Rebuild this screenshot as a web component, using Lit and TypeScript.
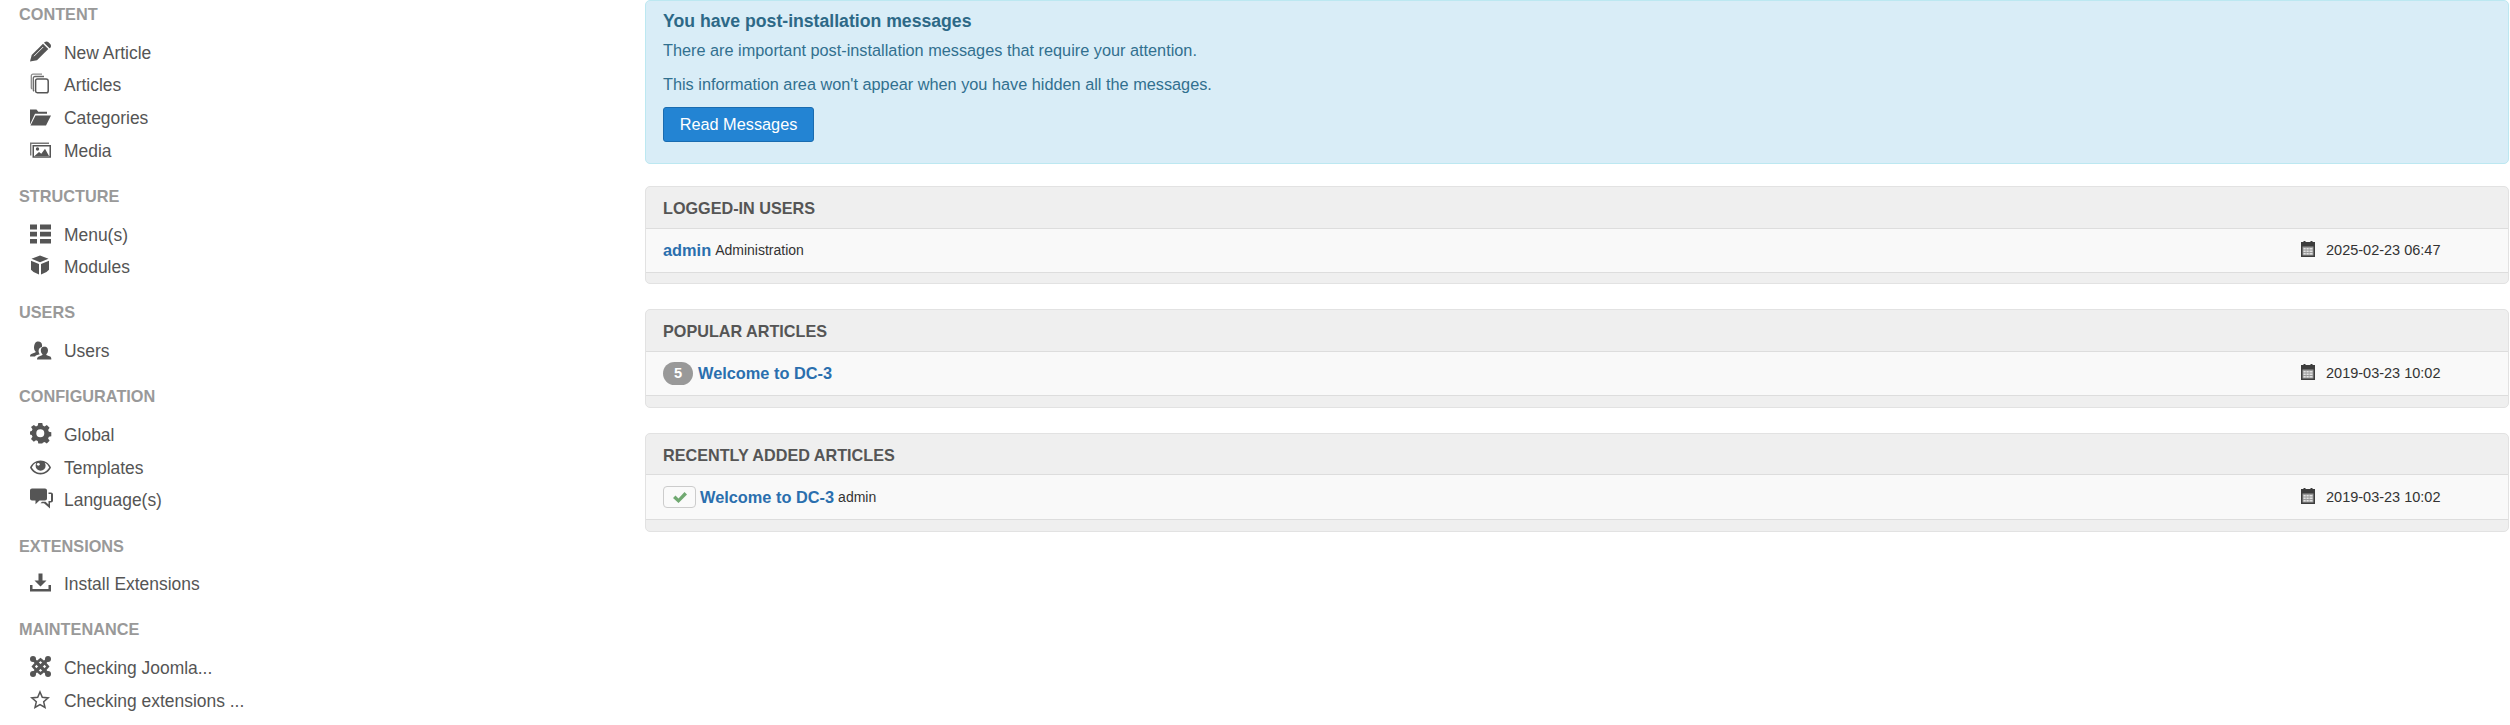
import { LitElement, html, css, svg } from "lit";
import { customElement } from "lit/decorators.js";

const icons: Record<string, any> = {
  pencil: svg`<path d="M1.700 14L13 2.700l5.300 5.300L7 19.300 0 20.500z"/><path d="M14.500 1.300c1.300-1.200 3-1 4 0l1.700 1.700c1 1 1.200 2.700 0 4L19.500 7.200 14 1.800z"/><path d="M4 15.200L13.200 6" stroke="#fff" stroke-width=".9" fill="none"/>`,
  copy: svg`<path fill="none" stroke="#8a8a8a" stroke-width="1.300" d="M12 1.200H3c-1 0-1.700.7-1.700 1.700v11.500c0 .8.300 1.200.7 1.500"/><path fill="none" stroke="#666" stroke-width="1.300" d="M14 3.500H5c-1 0-1.700.7-1.700 1.700v11.500c0 .8.300 1.200.7 1.500"/><path fill="#fff" stroke="currentColor" stroke-width="1.500" d="M7.300 6H16c1.300 0 2.200 1 2.200 2.200V18c0 1-.8 1.800-1.800 1.800H7.300c-1 0-1.700-.7-1.700-1.700V7.700C5.600 6.700 6.300 6 7.300 6z"/>`,
  folder: svg`<path d="M0 3.500h6.500l1.800 2.200H17v2H5L0 18.500z"/><path d="M5.500 9.500H21l-5 10H0.500z"/>`,
  images: svg`<path fill="#777" d="M0 3.500h19v1.400H1.400v11.500H0z"/><path fill-rule="evenodd" d="M2.500 6H21v12.800H2.500zM4 7.500v9.800h15.500V7.500z"/><circle cx="7.500" cy="10" r="1.700"/><path d="M4.500 17l4.500-4 2.300 1.700 3.700-5 4 7.300z"/>`,
  list: svg`<path d="M0 1.500h7v5H0zM10 1.500h11v5H10zM0 8.800h7v4.800H0zM10 8.800h11v4.800H10zM0 16h7v4.500H0zM10 16h11v4.500H10z"/>`,
  cube: svg`<path d="M10 .5l8.500 3.300L10 7.200 1.500 3.800zM1 5.700l8 3.200v10.600l-5.500-2.500L1 14.800zM19 5.700l-8 3.200v10.600l5.500-2.500 2.500-2.200z"/>`,
  users: svg`<path d="M8.200 2.500c2.300 0 3.900 1.700 3.900 3.900 0 .5-.1 1-.2 1.500-1.900.3-3.300 1.900-3.300 4 0 1.300.5 2.500 1.300 3.300l-2.700.9c-.9.300-1.700.8-2.200 1.300H0c.1-1.800.7-2.400 2.500-3l2.600-.9c.5-.2.600-.6.500-1.100-.9-.8-1.600-2.200-1.600-4C4.300 4.200 5.900 2.500 8.200 2.500z"/><path d="M14.200 7.500c2.300 0 3.800 1.600 3.800 3.700 0 2-.8 3.200-1.700 4 0 .6.100.9.600 1.100l2.500.9c1.300.5 1.700.9 1.900 2.300v1H7c.1-1.900.6-2.600 2.500-3.300l2.400-.9c.5-.2.600-.5.600-1.100-.9-.8-1.700-2-1.700-4 0-2.100 1.500-3.700 3.900-3.700z"/>`,
  gear: svg`<path fill-rule="evenodd" d="M8 0h4l.5 2.600 1.800.8 2.200-1.500 2.800 2.800-1.500 2.200.8 1.800 2.400.5v4l-2.400.5-.8 1.800 1.500 2.200-2.800 2.800-2.200-1.500-1.800.8L12 20.500H8l-.5-2.500-1.800-.8-2.200 1.500L.700 15.900l1.500-2.200-.8-1.800L-1 11.400 0 8.300l1.400-.3.800-1.800L.700 4 3.500 1.900l2.200 1.500 1.800-.8zM10 6.200a4 4 0 100 8 4 4 0 000-8z" transform="translate(.3 0)"/>`,
  eye: svg`<path fill-rule="evenodd" d="M10.500 4.500c4.800 0 8.700 2.900 10.500 7-1.800 4.100-5.700 7-10.500 7S1.800 15.600 0 11.500c1.800-4.100 5.700-7 10.500-7zM6.300 6.700C4.300 7.500 2.800 9.300 1.800 11.500c1.600 3 4.900 5.300 8.700 5.300s7.100-2.300 8.700-5.300c-1-2.200-2.500-4-4.500-4.800.6.900.9 1.900.9 3a5 5 0 01-10 0c0-1.100.300-2.100.7-3z"/><circle cx="8.300" cy="8.300" r="1.400" fill="#fff"/>`,
  comments: svg`<path d="M2 .5h13c1.100 0 2 .9 2 2v8c0 1.100-.9 2-2 2H9.500l-4 3.700V12.500H2c-1.100 0-2-.9-2-2v-8C0 1.400.900.500 2 .5z"/><path d="M18.500 4.500h2.500c1.100 0 2 .9 2 2v6c0 1.100-.9 2-2 2h-1v6l-6-5.300h-3.500l1.500-1.500h3.500l3 2.700V13h2.500V6h-2.500z"/>`,
  download: svg`<path d="M8.500 1.500h4v7H16.500l-6 6-6-6h4zM0 13h2.500v4h16v-4H21v6.500H0z"/>`,
  joomla: svg`<g fill="none" stroke="currentColor" stroke-width="3.200"><path d="M3 3l15 15M18 3L3 18"/></g><path fill="none" stroke="currentColor" stroke-width="2.600" d="M6.500 6.800l4-3.300 4 3.300 3.300 3.700-3.300 3.700-4 3.300-4-3.300-3.300-3.700z"/><circle cx="3" cy="3" r="3"/><circle cx="18" cy="3" r="3"/><circle cx="3" cy="18" r="3"/><circle cx="18" cy="18" r="3"/>`,
  star: svg`<path fill="none" stroke="currentColor" stroke-width="1.500" d="M10 3l2.300 5.300 5.900.6-4.500 3.900 1.300 5.700L10 15.500l-5 3 1.300-5.700-4.500-3.900 5.900-.6z"/>`,
  cal: svg`<path fill="#3d3d3d" d="M0 1h2.500V0h2v1h5V0h2v1H14v15H0z"/><path fill="#9a9a9a" d="M1.500 5.500h11v9h-11z"/><path fill="#e2e2e2" d="M2.500 7h2.200v1.500H2.500zM5.500 7h2.200v1.500H5.500zM8.500 7h3v1.500h-3zM2.500 9.500h2.200V11H2.500zM5.500 9.500h2.200V11H5.500zM8.500 9.500h3V11h-3zM2.500 12h2.200v1.500H2.500zM5.500 12h2.200v1.500H5.500zM8.500 12h3v1.500h-3z"/>`,
  check: svg`<path d="M0 6l2.500-2.500 3 3L11.500 0 14 2.500 5.500 11z"/>`,
};

const ic = (n: string, w: number, h: number, vb: string, cls = "ic") =>
  html`<svg class=${cls} width=${w} height=${h} viewBox=${vb} fill="currentColor">${icons[n]}</svg>`;

const groups = [
  { t: "CONTENT", items: [["pencil", "New Article"], ["copy", "Articles"], ["folder", "Categories"], ["images", "Media"]] },
  { t: "STRUCTURE", items: [["list", "Menu(s)"], ["cube", "Modules"]] },
  { t: "USERS", items: [["users", "Users"]] },
  { t: "CONFIGURATION", items: [["gear", "Global"], ["eye", "Templates"], ["comments", "Language(s)"]] },
  { t: "EXTENSIONS", items: [["download", "Install Extensions"]] },
  { t: "MAINTENANCE", items: [["joomla", "Checking Joomla..."], ["star", "Checking extensions ..."]] },
];

@customElement("app-root")
export class AppRoot extends LitElement {
  static styles = css`
    :host { display: block; font-family: "Liberation Sans", Arial, sans-serif; color: #515151; background: #fff; height: 725px; overflow: hidden; }
    .page { display: flex; align-items: flex-start; }
    .side { width: 645px; flex: none; padding-top: 2px; }
    .cap { height: 24px; line-height: 24px; margin: 0 0 11px 19px; font-size: 16.300px; font-weight: 700; color: #999; }
    .group { margin-bottom: 16.400px; }
    .item { display: flex; align-items: center; height: 32.600px; padding-left: 30px; font-size: 17.450px; color: #555; }
    .ic { display: block; flex: none; margin-bottom: 4px; }
    .iw { width: 34px; flex: none; }
    .main { flex: 1; min-width: 0; margin-right: 1px; }
    .alert { box-sizing: border-box; height: 164px; background: #d9edf7; border: 1px solid #bce8f1; border-radius: 5px; color: #31708f; padding: 0 17px; font-size: 16.300px; margin-bottom: 22px; }
    .alert h4 { margin: 10px 0 0; font-size: 17.650px; line-height: 20px; font-weight: 700; color: #2d6987; }
    .alert p { margin: 0; line-height: 24px; }
    .p1 { margin-top: 7px !important; }
    .p2 { margin-top: 10px !important; }
    .btn { box-sizing: border-box; display: flex; align-items: center; justify-content: center; width: 151px; height: 35px; margin-top: 11px; background: #2384d3; border: 1px solid #1a6cb0; border-radius: 3px; color: #fff; font-size: 16.300px; }
    .panel { border: 1px solid #e2e2e2; border-radius: 5px; background: #efefef; margin-bottom: 25px; padding-bottom: 10.800px; }
    .head { box-sizing: border-box; height: 41.600px; line-height: 43px; padding-left: 17px; font-size: 16.200px; font-weight: 700; color: #555; border-bottom: 1px solid #ddd; }
    .row { box-sizing: border-box; height: 44px; display: flex; align-items: center; padding-left: 17px; background: #f9f9f9; border-bottom: 1px solid #ddd; color: #333; font-size: 14px; }
    .row.tall { height: 45px; }
    .link { color: #2a6fae; font-weight: 700; font-size: 16.350px; }
    .sub { margin-left: 4px; color: #333; }
    .date { margin-left: auto; width: 207px; flex: none; display: flex; align-items: center; font-size: 14.500px; color: #333; }
    .date .cal { margin-right: 11px; margin-bottom: 2px; }
    .badge { box-sizing: border-box; width: 30px; height: 23px; line-height: 23px; text-align: center; border-radius: 12px; background: #999; color: #fff; font-size: 14.600px; font-weight: 700; margin-right: 5px; }
    .ok { box-sizing: border-box; width: 33px; height: 22px; display: flex; align-items: center; justify-content: center; border: 1px solid #ccc; border-radius: 4px; background: #fafafa; margin-right: 4px; color: #70a971; }
  `;
  private date(d: string) {
    return html`<span class="date">${ic("cal", 14, 16, "0 0 14 16", "cal")}${d}</span>`;
  }
  render() {
    return html`<div class="page">
      <nav class="side">
        ${groups.map((g) => html`<div class="group">
          <div class="cap">${g.t}</div>
          ${g.items.map((i) => html`<div class="item"><span class="iw">${ic(i[0], 23, 21, "0 0 23 21")}</span><span>${i[1]}</span></div>`)}
        </div>`)}
      </nav>
      <main class="main">
        <section class="alert">
          <h4>You have post-installation messages</h4>
          <p class="p1">There are important post-installation messages that require your attention.</p>
          <p class="p2">This information area won't appear when you have hidden all the messages.</p>
          <div class="btn">Read Messages</div>
        </section>
        <section class="panel">
          <div class="head">LOGGED-IN USERS</div>
          <div class="row"><span class="link">admin</span><span class="sub">Administration</span>${this.date("2025-02-23 06:47")}</div>
        </section>
        <section class="panel">
          <div class="head">POPULAR ARTICLES</div>
          <div class="row"><span class="badge">5</span><span class="link">Welcome to DC-3</span>${this.date("2019-03-23 10:02")}</div>
        </section>
        <section class="panel">
          <div class="head">RECENTLY ADDED ARTICLES</div>
          <div class="row tall"><span class="ok">${ic("check", 14, 11, "0 0 14 11", "chk")}</span><span class="link">Welcome to DC-3</span><span class="sub">admin</span>${this.date("2019-03-23 10:02")}</div>
        </section>
      </main>
    </div>`;
  }
}
